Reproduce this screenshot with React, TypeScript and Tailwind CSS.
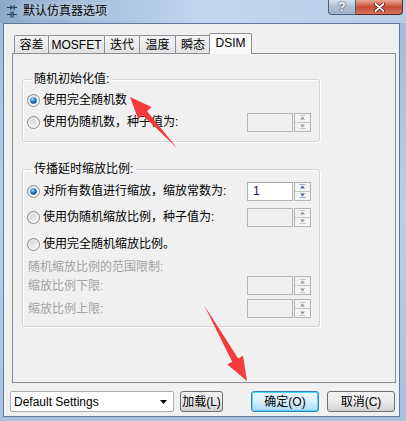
import React from 'react';

// Win7 style radio button
const Radio = ({ checked }: { checked?: boolean }) => (
  <svg width="13" height="13" viewBox="0 0 13 13" className="shrink-0">
    <defs>
      <linearGradient id="rbg" x1="0" y1="0" x2="1" y2="1">
        <stop offset="0" stopColor="#cbcbcb" />
        <stop offset="1" stopColor="#fdfdfd" />
      </linearGradient>
      <radialGradient id="rdot" cx="0.38" cy="0.32" r="0.75">
        <stop offset="0" stopColor="#a8dcff" />
        <stop offset="0.45" stopColor="#2f86d4" />
        <stop offset="1" stopColor="#0b3a73" />
      </radialGradient>
    </defs>
    <circle cx="6.5" cy="6.5" r="6" fill="url(#rbg)" stroke="#8b8b8b" />
    <circle cx="6.5" cy="6.5" r="4.6" fill="none" stroke="#ffffff" strokeOpacity="0.7" />
    {checked && <circle cx="6.5" cy="6.5" r="3.2" fill="url(#rdot)" />}
  </svg>
);

const Arrow = ({ up, enabled }: { up?: boolean; enabled?: boolean }) => {
  const c = enabled ? '#4a63a0' : '#9a9a9a';
  return (
    <svg width="7" height="5" viewBox="0 0 7 5">
      {up ? (
        <>
          <line x1="0.5" y1="0.5" x2="6.5" y2="0.5" stroke={c} strokeWidth="1" opacity="0.5" />
          <path d="M1 4.5 L3.5 1.5 L6 4.5 Z" fill={c} />
        </>
      ) : (
        <>
          <path d="M1 0.5 L3.5 3.5 L6 0.5 Z" fill={c} />
          <line x1="0.5" y1="4.5" x2="6.5" y2="4.5" stroke={c} strokeWidth="1" opacity="0.5" />
        </>
      )}
    </svg>
  );
};

const Spin = ({ value, enabled }: { value?: string; enabled?: boolean }) => (
  <div className="flex h-[19px] shrink-0">
    <div
      className={`w-[46px] h-full border text-[12px] leading-[17px] pl-[5px] text-[#3a0b57] ${
        enabled ? 'bg-white border-[#b0b3b8] border-t-[#9da1a6]' : 'bg-[#f0f0f0] border-[#b6b6b6]'
      }`}
    >
      {value}
    </div>
    <div className="ml-px w-[17px] h-full flex flex-col border border-[#b3b3b3] bg-[#f4f4f4]">
      <div className="flex-1 flex items-center justify-center border-b border-[#c6c6c6]">
        <Arrow up enabled={enabled} />
      </div>
      <div className="flex-1 flex items-center justify-center">
        <Arrow enabled={enabled} />
      </div>
    </div>
  </div>
);

const RadioRow = ({ label, checked, spin, spinValue, spinEnabled }: { label: string; checked?: boolean; spin?: boolean; spinValue?: string; spinEnabled?: boolean }) => (
  <div className="flex items-center h-[20px]">
    <Radio checked={checked} />
    <span className="ml-[3px] flex-1 text-black leading-[16px]">{label}</span>
    {spin && <Spin value={spinValue} enabled={spinEnabled} />}
  </div>
);

const tabs = ['容差', 'MOSFET', '迭代', '温度', '瞬态'];
const tabW = ['w-[35px]', 'w-[57px]', 'w-[36px]', 'w-[37px]', 'w-[36px]'];

const Button = ({ label, w, focused }: { label: string; w: string; focused?: boolean }) => (
  <div
    className={`${w} h-[21px] rounded-[3px] border flex items-center justify-center text-[12px] text-black ${
      focused
        ? 'border-[#3c7fb1] bg-gradient-to-b from-[#eaf6fd] via-[#d9f0fc] to-[#a7d9f5] shadow-[inset_0_0_0_1px_#48d6fb]'
        : 'border-[#707070] bg-gradient-to-b from-[#f2f2f2] via-[#ebebeb] to-[#cfcfcf]'
    }`}
  >
    {label}
  </div>
);

export default function App() {
  return (
    <div className="relative w-[406px] h-[421px] overflow-hidden flex flex-col bg-gradient-to-b from-[#9fb9d6] via-[#b9d0e9] to-[#a7c1de] font-['Liberation_Sans','Noto_Sans_CJK_SC',sans-serif] text-[12px]">
      {/* Title bar */}
      <div className="h-[23px] flex items-start shrink-0 bg-gradient-to-r from-[#8eaacb] via-[#c2d7ee] to-[#b7cde6]">
        <svg width="12" height="14" viewBox="0 0 12 14" className="ml-[6px] mt-[4px]">
          <path d="M1 3.5 H4 M8 3.5 H11" stroke="#1d3557" strokeWidth="1" />
          <path d="M4 1 L8 3.5 L4 6 Z" fill="#2b4f86" />
          <line x1="8" y1="1" x2="8" y2="6" stroke="#1d3557" />
          <path d="M1 10.5 H4.5 M7.5 10.5 H11" stroke="#1d3557" />
          <rect x="4.5" y="7.5" width="1.2" height="6" fill="#1d3557" />
          <rect x="6.5" y="7.5" width="1.2" height="6" fill="#1d3557" />
        </svg>
        <span className="ml-[5px] mt-[3px] text-[12px] leading-[16px] text-black [text-shadow:0_0_8px_#eef5fc]">
          默认仿真器选项
        </span>
        <div className="flex-1" />
        <div className="w-[28px] h-[15px] rounded-bl-[4px] border border-t-0 border-[#4a6380] bg-gradient-to-b from-[#d6e1ed] via-[#aebfd3] to-[#9fb2c8] flex items-center justify-center text-white font-bold text-[12px] leading-none [text-shadow:0_0_1px_#2d3f55,0_0_2px_#2d3f55]">
          ?
        </div>
        <div className="mr-[3px] w-[47px] h-[15px] rounded-br-[4px] border border-t-0 border-l-0 border-[#5a2a24] bg-gradient-to-b from-[#e8a795] via-[#c74a34] to-[#d7735d] flex items-center justify-center">
          <svg width="11" height="9" viewBox="0 0 11 9">
            <path d="M1.5 1 L9.5 8 M9.5 1 L1.5 8" stroke="#3a1410" strokeWidth="3.2" strokeLinecap="round" />
            <path d="M1.5 1 L9.5 8 M9.5 1 L1.5 8" stroke="#ffffff" strokeWidth="1.8" strokeLinecap="round" />
          </svg>
        </div>
      </div>

      {/* Client area */}
      <div className="flex-1 ml-[3px] mr-[6px] mb-[4px] bg-[#f0f0f0] border border-[#5d7b9f] flex flex-col">
        {/* Tabs */}
        <div className="flex items-end pt-[8px] pl-[10px] h-[29px] shrink-0">
          {tabs.map((t, i) => (
            <div
              key={t}
              className={`${tabW[i]} h-[18px] -mr-px border border-b-0 border-[#8c8f97] rounded-t-[2px] bg-gradient-to-b from-[#f4f4f4] to-[#e2e2e2] flex items-center justify-center text-black leading-[16px]`}
            >
              {t}
            </div>
          ))}
          <div className="relative z-10 w-[43px] h-[21px] -ml-px -mb-px border border-b-0 border-[#8c8f97] rounded-t-[2px] bg-[#f9f9f9] flex items-center justify-center text-black leading-[16px] pb-[2px]">
            DSIM
          </div>
        </div>

        {/* Tab panel */}
        <div className="ml-[8px] w-[384px] h-[330px] border border-[#8c8f97] bg-[#f0f0f0] pl-[9px] pt-[17px] flex flex-col">
          <fieldset className="w-[298px] border border-[#d0d7dd] rounded-[3px] shadow-[inset_1px_1px_0_#ffffff,1px_1px_0_#ffffff] pl-[4px] pr-[8px] pb-[9px]">
            <legend className="ml-[4px] px-[3px] leading-[16px] text-black">随机初始化值:</legend>
            <div className="mt-[3px] flex flex-col gap-[2px]">
              <RadioRow label="使用完全随机数" checked />
              <RadioRow label="使用伪随机数，种子值为:" spin />
            </div>
          </fieldset>

          <fieldset className="mt-[19px] w-[298px] border border-[#d0d7dd] rounded-[3px] shadow-[inset_1px_1px_0_#ffffff,1px_1px_0_#ffffff] pl-[4px] pr-[8px] pb-[8px]">
            <legend className="ml-[4px] px-[3px] leading-[16px] text-black">传播延时缩放比例:</legend>
            <div className="mt-[4px] flex flex-col">
              <RadioRow label="对所有数值进行缩放，缩放常数为:" checked spin spinValue="1" spinEnabled />
              <div className="h-[6px]" />
              <RadioRow label="使用伪随机缩放比例，种子值为:" spin />
              <div className="h-[7px]" />
              <RadioRow label="使用完全随机缩放比例。" />
              <div className="h-[4px] " />
              <div className="h-[18px] flex items-center pl-[1px] text-[#a3a3a3] leading-[16px]">随机缩放比例的范围限制:</div>
              <div className="h-[19px] flex items-center pl-[1px] text-[#a3a3a3] leading-[16px]">
                <span className="flex-1">缩放比例下限:</span>
                <Spin />
              </div>
              <div className="h-[4px]" />
              <div className="h-[19px] flex items-center pl-[1px] text-[#a3a3a3] leading-[16px]">
                <span className="flex-1">缩放比例上限:</span>
                <Spin />
              </div>
            </div>
          </fieldset>
        </div>

        {/* Bottom bar */}
        <div className="flex items-center mt-[8px] pl-[6px]">
          <div className="w-[164px] h-[21px] border border-[#abadb3] rounded-[2px] bg-white flex items-center pl-[3px] pr-[6px] text-black">
            <span className="flex-1">Default Settings</span>
            <svg width="7" height="4" viewBox="0 0 7 4">
              <path d="M0 0 H7 L3.5 4 Z" fill="#000" />
            </svg>
          </div>
          <div className="ml-[6px]">
            <Button label="加载(L)" w="w-[43px]" />
          </div>
          <div className="ml-[28px]">
            <Button label="确定(O)" w="w-[68px]" focused />
          </div>
          <div className="ml-[8px]">
            <Button label="取消(C)" w="w-[68px]" />
          </div>
        </div>
      </div>

      {/* Red annotation arrows */}
      <svg className="absolute inset-0 pointer-events-none" width="406" height="421" viewBox="0 0 406 421">
        <polygon points="130,97 151.5,107.1 147.1,111.2 177,148 142.7,115.2 138.3,119.3" fill="#f43a3a" />
        <polygon points="247,381 243,355.7 238.2,358.4 204,305 232.2,361.8 227.4,364.5" fill="#f43a3a" />
      </svg>
    </div>
  );
}
